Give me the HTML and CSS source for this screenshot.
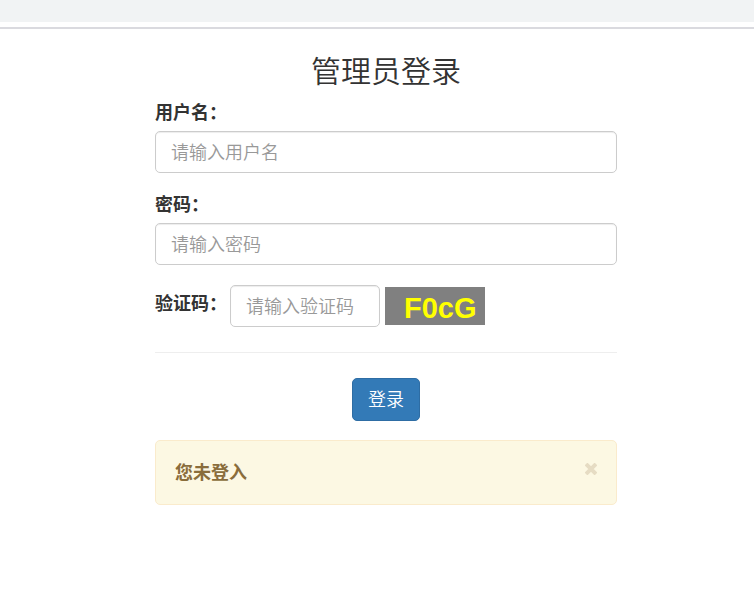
FILE: index.html
```html
<!DOCTYPE html>
<html lang="zh-CN">
<head>
<meta charset="utf-8">
<title>管理员登录</title>
<link rel="stylesheet" href="styles.css">
</head>
<body>
<div class="topbar"></div>
<main class="page">
  <div class="container">
    <h1 class="title">管理员登录</h1>
    <form>
      <div class="form-group">
        <label for="user">用户名：</label>
        <input class="form-control" type="text" id="user" placeholder="请输入用户名">
      </div>
      <div class="form-group">
        <label for="password">密码：</label>
        <input class="form-control" type="password" id="password" placeholder="请输入密码">
      </div>
      <div class="form-inline">
        <label for="code">验证码：</label>
        <input class="form-control code" type="text" id="code" placeholder="请输入验证码">
        <svg class="captcha" viewBox="0 0 100 38" role="img" aria-label="F0cG"><rect width="100" height="38" fill="#808080"/><text x="19" y="31">F0cG</text></svg>
      </div>
      <hr>
      <button class="btn" type="submit">登录</button>
      <div class="alert" role="alert">
        <strong>您未登入</strong>
        <button class="close" type="button" aria-label="Close">
          <svg viewBox="0 0 12 12" width="12" height="12"><path d="M1 1 11 11M11 1 1 11" stroke="#e6dcc3" stroke-width="4"/></svg>
        </button>
      </div>
    </form>
  </div>
</main>
</body>
</html>
```
FILE: styles.css
```css
* { box-sizing: border-box; }
body {
  margin: 0;
  background: #fff;
  color: #333;
  font: 18px/25px "Noto Sans", "Noto Sans CJK SC", sans-serif;
}
.topbar {
  height: 29px;
  background: #f1f3f4;
  border-bottom: 2px solid #dadadf;
  box-shadow: inset 0 -5px #fff;
}
.page { padding-left: 18px; }
.container {
  max-width: 462px;
  margin: 0 auto;
}
.title {
  margin: 25px 0 13px;
  font-size: 30px;
  font-weight: 350;
  line-height: 33px;
  text-align: center;
}
label {
  margin-bottom: 6px;
  font-weight: 700;
}
.form-group { margin-bottom: 19px; }
.form-group label { display: block; }
.form-control {
  display: block;
  width: 100%;
  height: 42px;
  padding: 7px 15px;
  border: 1px solid #ccc;
  border-radius: 5px;
  box-shadow: inset 0 1px 1px rgba(0, 0, 0, .075);
  font: inherit;
  font-weight: 350;
  color: #555;
}
.form-control::placeholder { color: #999; opacity: 1; }
.form-inline {
  display: flex;
  align-items: center;
  gap: 5px;
  margin-top: 20px;
}
.form-inline label { width: 70px; white-space: nowrap; }
.form-control.code { width: 150px; }
.captcha { width: 100px; height: 38px; }
.captcha text {
  font: bold 29px "Liberation Sans", sans-serif;
  fill: #ff0;
}
hr {
  margin: 25px 0;
  border: 0;
  border-top: 1px solid #eee;
}
.btn {
  display: block;
  margin: 0 auto 19px;
  height: 43px;
  padding: 0 15px;
  border: 1px solid #2e6da4;
  border-radius: 5px;
  background: #337ab7;
  color: #fff;
  font: inherit;
  font-weight: 350;
}
.alert {
  display: flex;
  justify-content: space-between;
  align-items: flex-start;
  padding: 19px;
  border: 1px solid #faebcc;
  border-radius: 5px;
  background: #fcf8e3;
  color: #8a6d3b;
}
.close {
  display: flex;
  padding: 3px 0;
  border: 0;
  background: none;
  cursor: pointer;
}
```
